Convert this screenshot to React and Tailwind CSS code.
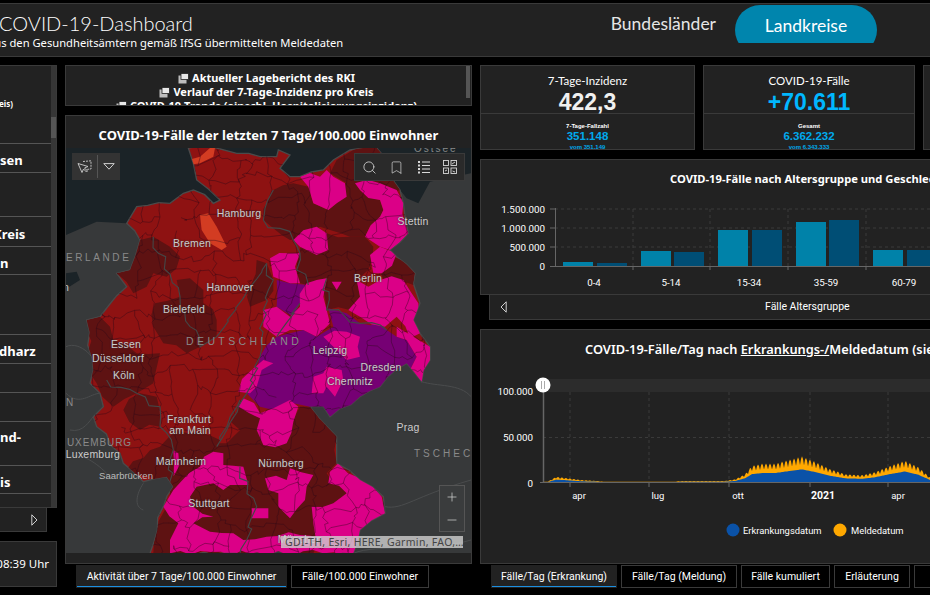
import React from "react";
import { Search, Bookmark, Plus, Minus } from "lucide-react";

function rnd(seed) {
  let s = seed;
  return () => {
    s = (s * 16807) % 2147483647;
    return s / 2147483647;
  };
}
function jag(str, seed, step = 30, amp = 11) {
  const r = rnd(seed);
  const p = str.split(" ").map((q) => q.split(",").map(Number));
  const out = [];
  for (let i = 0; i < p.length; i++) {
    const a = p[i];
    const b = p[(i + 1) % p.length];
    out.push(a);
    const dx = b[0] - a[0];
    const dy = b[1] - a[1];
    const len = Math.hypot(dx, dy);
    const n = Math.floor(len / step);
    for (let k = 1; k < n; k++) {
      const o = (r() - 0.5) * amp * 2;
      out.push([a[0] + (dx * k) / n - (dy / len) * o, a[1] + (dy * k) / n + (dx / len) * o]);
    }
  }
  return out.map((q) => `${q[0].toFixed(0)},${q[1].toFixed(0)}`).join(" ");
}
function jagLine(str, seed) {
  const r = rnd(seed);
  const p = str.split(" ").map((q) => q.split(",").map(Number));
  const out = [p[0]];
  for (let i = 1; i < p.length; i++) {
    const a = p[i - 1];
    const b = p[i];
    const len = Math.hypot(b[0] - a[0], b[1] - a[1]);
    const n = Math.max(1, Math.floor(len / 22));
    for (let k = 1; k <= n; k++) {
      const o = k === n ? 0 : (r() - 0.5) * 22;
      out.push([a[0] + ((b[0] - a[0]) * k) / n + o, a[1] + ((b[1] - a[1]) * k) / n - o]);
    }
  }
  return out.map((q) => `${q[0].toFixed(0)},${q[1].toFixed(0)}`).join(" ");
}

const GERMANY = jag("385,24 470,24 530,40 600,50 650,50 655,30 690,45 660,85 690,110 720,110 790,90 820,60 870,30 950,24 990,90 1020,150 1030,190 1045,280 990,330 1010,350 1065,400 1060,430 1080,490 1060,540 1080,580 1110,620 1110,660 1085,725 1040,670 960,740 900,770 810,830 790,800 750,800 830,890 830,970 900,1020 970,1070 975,1120 900,1170 880,1240 270,1240 310,1100 340,1040 320,1010 250,1025 190,970 180,940 110,860 100,830 130,800 120,760 90,730 100,690 80,540 120,530 200,440 170,400 210,390 240,300 200,250 230,200 330,190 370,160 400,150 460,190 480,180 410,120 400,70", 77, 32, 7);

const DARK = [
  "610,240 640,150 700,130 745,140 760,190 805,210 830,190 855,130 880,120 900,150 960,180 970,210 915,290 870,290 810,270 780,260 720,295 690,300 640,265",
  "810,100 830,60 880,30 960,24 990,100 1020,150 900,140 860,130",
  "720,325 800,280 870,290 915,290 940,320 925,390 890,420 900,470 870,510 800,510 790,450 805,415 770,420 745,435 720,430 710,380",
  "960,390 1000,350 1065,400 1060,435 1020,420 970,420",
  "240,300 280,290 330,320 360,350 320,410 280,400 260,440 220,460 170,400 210,390",
  "350,420 390,415 430,450 430,490 470,540 470,590 420,620 380,640 310,610 280,560 285,490 360,470",
  "590,360 620,370 640,420 620,480 570,500 570,440",
  "80,540 120,530 160,600 230,640 300,640 280,730 230,760 160,800 110,730 90,700",
  "190,810 240,760 290,770 300,860 240,870",
  "200,990 300,920 350,870 480,900 540,780 600,830 660,870 720,800 760,800 830,890 830,970 800,1000 870,1060 800,1120 760,1240 280,1240 330,1050",
].map((p, i) => jag(p, 101 + i));
const RED_TOP = [
  "960,610 990,530 1010,540 1015,590 990,620",
  "480,860 500,835 540,870 500,910 480,910",
].map((p, i) => jag(p, 201 + i));
const PURPLE = [
  "650,420 690,430 745,435 720,490 700,530 650,500",
  "560,760 600,650 650,590 730,570 770,590 820,560 805,505 860,520 900,550 960,545 980,570 1010,590 1040,600 1070,650 1050,690 960,740 900,770 810,830 790,800 750,800 700,790 640,810 600,800",
].map((p, i) => jag(p, 301 + i));
const PINK = [
  "720,110 780,110 800,90 820,110 855,130 860,170 830,190 805,210 760,190 745,140",
  "885,130 960,130 1010,150 1030,190 1045,280 990,330 960,320 915,290 960,230 970,210 960,180 900,150",
  "930,345 960,320 1010,340 965,400 940,400",
  "700,300 770,260 800,280 805,330 770,345 720,320",
  "630,355 720,340 705,380 720,430 690,430 640,410",
  "815,425 845,425 830,450",
  "865,510 900,470 890,420 925,440 960,420 1030,420 1075,490 1080,580 1050,595 1010,530 975,560 900,530",
  "610,510 650,500 690,530 720,500 740,430 770,420 800,415 790,470 800,510 810,550 770,590 730,570 690,570 650,590 610,560",
  "790,590 860,575 900,590 900,650 860,660 820,620",
  "1010,560 1060,590 1110,620 1110,660 1085,725 1050,690 1070,650 1040,600 1010,590",
  "535,755 575,690 610,660 640,670 605,690 590,740 570,760",
  "755,760 760,710 790,700 800,680 845,690 850,720 825,770 800,740 790,760",
  "535,800 550,775 600,820 640,805 690,780 715,800 700,845 680,910 610,915 590,870 600,835",
  "420,980 460,935 490,940 490,975 550,980 565,1035 510,1035 490,1050 460,1030 410,1040 390,1070 400,1100 460,1130 400,1150 450,1175 520,1180 550,1200 620,1190 720,1185 780,1200 790,1240 330,1240 330,1200 355,1150 310,1100 340,1050",
  "615,1015 680,1020 690,985 760,1005 740,1040 735,1080 690,1135 655,1100 655,1060 625,1050",
  "575,1105 625,1105 625,1135 575,1135",
  "805,1030 835,970 900,1015 930,1030 965,1070 975,1120 900,1170 880,1240 790,1240 760,1150 755,1100 820,1090 860,1060",
  "340,930 355,940 340,1010 325,1045",
].map((p, i) => jag(p, 401 + i));
const ORANGE = [
  "385,60 420,50 450,24 465,24 460,50 420,70 385,75",
  "420,225 445,220 470,260 500,320 485,330 450,310 425,270",
];
const STATE_LINES = [
  "610,240 660,265 700,300 720,340 710,390 745,435",
  "640,150 610,240",
  "620,370 640,420 610,510 600,650 560,760 535,800 500,870 470,920",
  "280,290 360,470 420,620 470,590 620,370",
  "140,720 230,760 300,800 300,860 340,930 330,1050",
  "480,900 540,780",
  "540,980 590,1100 560,1200 540,1240",
  "800,415 800,510 900,550 980,570",
  "720,490 650,590",
].map((p, i) => jagLine(p, 501 + i));

const MESH = (() => {
  const r = rnd(12345);
  const step = 58;
  const pts = [];
  for (let i = 0; i < 23; i++) {
    pts.push([]);
    for (let j = 0; j < 23; j++) {
      pts[i].push([i * step + (r() - 0.5) * 44, j * step + (r() - 0.5) * 44]);
    }
  }
  const seg = (a, b) => {
    let d = `M${a[0].toFixed(0)} ${a[1].toFixed(0)}`;
    for (let k = 1; k < 4; k++) {
      const x = a[0] + ((b[0] - a[0]) * k) / 4 + (r() - 0.5) * 18;
      const y = a[1] + ((b[1] - a[1]) * k) / 4 + (r() - 0.5) * 18;
      d += `L${x.toFixed(0)} ${y.toFixed(0)}`;
    }
    return d + `L${b[0].toFixed(0)} ${b[1].toFixed(0)}`;
  };
  let d = "";
  for (let i = 0; i < 23; i++) {
    for (let j = 0; j < 23; j++) {
      if (i < 22 && r() > 0.2) d += seg(pts[i][j], pts[i + 1][j]);
      if (j < 22 && r() > 0.2) d += seg(pts[i][j], pts[i][j + 1]);
    }
  }
  return d;
})();

const LABELS = [
  ["Hamburg", 239, 213], ["Bremen", 192, 243], ["Stettin", 413, 221], ["Berlin", 368, 278],
  ["Hannover", 230, 287], ["Bielefeld", 184, 309], ["Essen", 126, 344], ["Düsseldorf", 118, 358],
  ["Köln", 124, 375], ["Leipzig", 330, 350], ["Dresden", 381, 367], ["Chemnitz", 350, 381],
  ["Frankfurt", 189, 419], ["am Main", 190, 430], ["Mannheim", 181, 461], ["Nürnberg", 281, 463],
  ["Prag", 408, 427], ["Stuttgart", 209, 503], ["Luxemburg", 93, 454], ["München", 300, 539], ["n", 66, 287],
];

function orange(x) {
  const env = [[543, 0], [548, 1], [556, 5.5], [565, 4.5], [580, 2.5], [598, 1.5], [604, 0.5], [672, 0.6], [682, 1.5], [725, 1.5], [735, 3], [745, 8], [752, 16], [762, 18], [775, 18], [790, 22], [802, 25], [815, 20], [830, 13], [845, 8], [862, 7], [875, 10], [890, 16], [905, 21], [918, 15], [930, 5]];
  for (let i = 1; i < env.length; i++) {
    if (x <= env[i][0]) {
      const t = (x - env[i - 1][0]) / (env[i][0] - env[i - 1][0]);
      return env[i - 1][1] + t * (env[i][1] - env[i - 1][1]);
    }
  }
  return 0;
}
const BASE = 482.5;
const areaPaths = (() => {
  let o = `M543 ${BASE}`;
  let b = `M543 ${BASE}`;
  for (let x = 543; x <= 930; x += 1) {
    const v = orange(x) * 1.05;
    const s = Math.sin((x / 8) * Math.PI * 2);
    const wave = 1 - 0.32 * (1 - Math.abs(s));
    o += `L${x} ${(BASE - Math.max(v * wave, 0.8)).toFixed(1)}`;
    b += `L${x} ${(BASE - v * 0.5).toFixed(1)}`;
  }
  return { o: o + `L930 ${BASE}Z`, b: b + `L930 ${BASE}Z` };
})();

function LinkIcon() {
  return (
    <svg width="11" height="11" viewBox="0 0 11 11" className="inline-block shrink-0">
      <rect x="0.5" y="2.5" width="8" height="8" fill="#bdbdbd" />
      <rect x="3" y="0.5" width="7.5" height="6" fill="#e8e8e8" stroke="#222" strokeWidth="0.8" />
    </svg>
  );
}

function Kpi({ w, title, value, color, small, big, sub }) {
  return (
    <div className={`${w} shrink-0 h-full bg-[#222222] border border-[#3a3a3a] flex flex-col items-center text-white`}>
      <div className="h-[48px] w-full border-b border-[#3a3a3a] flex flex-col items-center">
        <div className="mt-[7px] h-[16px] text-[11.5px] leading-[16px] font-['Lato',sans-serif]">{title}</div>
        <div className={`mt-[2px] text-[23px] leading-[22px] font-bold font-['Liberation_Sans',sans-serif] ${color}`}>{value}</div>
      </div>
      <div className="flex flex-col items-center font-['Liberation_Sans',sans-serif]">
        <div className="mt-[9px] text-[6px] leading-[6px] font-bold">{small}</div>
        <div className="text-[11.5px] leading-[12px] font-bold text-[#00a9ec] mt-[1px]">{big}</div>
        <div className="text-[6px] leading-[6px] font-bold text-[#00a9ec] mt-[2px]">{sub}</div>
      </div>
    </div>
  );
}

function Tab({ w, active, children }) {
  return (
    <div className={`${w} h-[23px] shrink-0 flex items-center justify-center text-[10.5px] text-white font-['Roboto',sans-serif] whitespace-nowrap border overflow-hidden ${active ? "bg-[#222222] border-[#222222] shadow-[inset_0_-1px_0_#1c8fe0]" : "bg-black border-[#3a3a3a]"}`}>
      {children}
    </div>
  );
}

function Row({ h, ml, top, children }) {
  return (
    <div className={`${h} shrink-0 border-b border-[#555] flex overflow-hidden ${top ? "items-start pt-[7px]" : "items-center pt-[4px]"}`}>
      {children ? <span className={`${ml} whitespace-nowrap text-[13px] leading-[16px] font-bold text-white font-['Noto_Sans','Open_Sans',sans-serif]`}>{children}</span> : null}
    </div>
  );
}

function GermanyMap() {
  return (
    <svg viewBox="18 24 1215 1215" className="absolute inset-0 w-full h-full">
      <defs>
        <clipPath id="de"><polygon points={GERMANY} /></clipPath>
      </defs>
      <rect x="18" y="24" width="1215" height="1215" fill="#37393a" />
      <polygon fill="#1b2327" points="18,24 1233,24 1233,100 1110,125 1075,190 1040,175 1020,150 700,200 400,200 230,200 200,250 110,245 18,285" />
      <polygon fill="#1b2327" points="18,400 50,395 60,420 28,440 18,440" />
      <path d="M18 620 C60 600 120 660 100 690 M18 760 C60 800 90 760 120 760 M30 870 C70 880 90 840 100 830 M140 1000 C100 960 60 940 30 950 M250 1030 C230 1060 220 1100 250 1110 M1085 725 C1130 740 1200 730 1233 770 M975 1100 C1030 1110 1060 1070 1233 1020 M880 1240 C950 1210 1100 1240 1233 1200" fill="none" stroke="#4a4c4d" strokeWidth="3" />
      <polygon points={GERMANY} fill="#8e1212" stroke="#4a4a4a" strokeWidth="4" />
      <g clipPath="url(#de)">
        {DARK.map((p, i) => <polygon key={i} points={p} fill="#5e1212" />)}
        {RED_TOP.map((p, i) => <polygon key={i} points={p} fill="#8e1212" />)}
        {PURPLE.map((p, i) => <polygon key={i} points={p} fill="#760074" />)}
        {PINK.map((p, i) => <polygon key={i} points={p} fill="#db0087" />)}
        {ORANGE.map((p, i) => <polygon key={i} points={p} fill="#d33c22" />)}
        <path d={MESH} fill="none" stroke="#2c0a18" strokeOpacity="0.62" strokeWidth="2" />
        {STATE_LINES.map((p, i) => <polyline key={i} points={p} fill="none" stroke="#454545" strokeWidth="3.5" />)}
      </g>
    </svg>
  );
}

const CHART_FONT = { fontFamily: "Roboto,sans-serif" };

function BarChart() {
  const bars = [
    [88, 4, "#0082a9"], [122, 3, "#004e75"], [166, 15, "#0082a9"], [199, 14, "#004e75"],
    [243, 36, "#0082a9"], [277, 36, "#004e75"], [321, 44, "#0082a9"], [354, 46, "#004e75"],
    [398, 16, "#0082a9"], [432, 16, "#004e75"],
  ];
  return (
    <svg width="450" height="96" viewBox="481 199 450 96" className="block">
      <g stroke="#3a3a3a" strokeDasharray="3 3">
        {[209, 228, 247].map((y) => <line key={y} x1="555" x2="931" y1={y} y2={y} />)}
        {[633, 710, 788, 866].map((x) => <line key={x} x1={x} x2={x} y1="209" y2="266" />)}
      </g>
      {bars.map(([x, h, c], i) => (
        <rect key={i} x={475 + x} y={266 - h} width="30" height={h} fill={c} />
      ))}
      <g stroke="#666">
        <line x1="555.5" x2="555.5" y1="208" y2="266" />
        <line x1="550" x2="931" y1="266.5" y2="266.5" />
        {[209, 228, 247].map((y) => <line key={y} x1="550" x2="555" y1={y} y2={y} />)}
        {[633, 710, 788, 866].map((x) => <line key={x} x1={x} x2={x} y1="266" y2="270" />)}
      </g>
      <g fill="#fff" fontSize="9.8" style={CHART_FONT}>
        {[["1.500.000", 213], ["1.000.000", 232], ["500.000", 251], ["0", 270]].map(([t, y]) => (
          <text key={t} x="545" y={y} textAnchor="end">{t}</text>
        ))}
        {[["0-4", 594], ["5-14", 671], ["15-34", 749], ["35-59", 826], ["60-79", 904]].map(([t, x]) => (
          <text key={t} x={x} y="286" textAnchor="middle">{t}</text>
        ))}
      </g>
    </svg>
  );
}

function AreaChart() {
  return (
    <svg width="450" height="180" viewBox="481 372 450 180" className="block">
      <rect x="543" y="379" width="388" height="13" fill="#2c2c2c" />
      <g stroke="#3a3a3a" strokeDasharray="3 3">
        <line x1="543" x2="931" y1="437.5" y2="437.5" />
        {[570, 649, 729, 810, 888].map((x) => <line key={x} x1={x} x2={x} y1="392" y2="482" />)}
      </g>
      <path d={areaPaths.o} fill="#ffa800" />
      <path d={areaPaths.b} fill="#0a52a8" />
      <g stroke="#666">
        <line x1="543.5" x2="543.5" y1="385" y2="483" strokeWidth="1.5" />
        <line x1="540" x2="931" y1="482.5" y2="482.5" />
        {[570, 649, 729, 810, 888].map((x) => <line key={x} x1={x} x2={x} y1="482" y2="487" />)}
      </g>
      <g fill="#fff" fontSize="9.8" style={CHART_FONT}>
        {[["100.000", 395], ["50.000", 441], ["0", 487]].map(([t, y]) => (
          <text key={t} x="533" y={y} textAnchor="end">{t}</text>
        ))}
      </g>
      <g fill="#fff" fontSize="9.5" style={CHART_FONT}>
        {[["apr", 579], ["lug", 658], ["ott", 738], ["apr", 898]].map(([t, x], i) => (
          <text key={i} x={x} y="499" textAnchor="middle">{t}</text>
        ))}
        <text x="823" y="499" textAnchor="middle" fontWeight="700" fontSize="10.5">2021</text>
        <text x="743" y="534" fontSize="9.4">Erkrankungsdatum</text>
        <text x="851" y="534" fontSize="9.4">Meldedatum</text>
      </g>
      <circle cx="543" cy="385" r="7.5" fill="#fff" />
      <path d="M541.5 381V389M544.5 381V389" stroke="#aaa" strokeWidth="1" />
      <circle cx="733" cy="530" r="6.5" fill="#0a52a8" />
      <circle cx="840" cy="530" r="6.5" fill="#ffa800" />
    </svg>
  );
}

export default function App() {
  return (
    <div className="w-[930px] h-[595px] overflow-hidden bg-black flex flex-col">
      <header className="mt-[3px] h-[54px] shrink-0 bg-[#222222] border-y border-[#3a3a3a] flex justify-between text-white">
        <div className="overflow-hidden w-[400px] pt-[6px]">
          <div className="text-[20px] leading-[26px] font-light font-['Lato',sans-serif] whitespace-nowrap -ml-[1px]">COVID-19-Dashboard</div>
          <div className="text-[11.2px] leading-[16px] mt-[-1px] font-['Noto_Sans','Open_Sans',sans-serif] whitespace-nowrap -ml-[12px]">aus den Gesundheitsämtern gemäß IfSG übermittelten Meldedaten</div>
        </div>
        <nav className="flex items-start pr-[53px] font-['Lato',sans-serif] text-[17.5px]">
          <div className="h-[38px] mt-[1px] flex items-center mr-[19px] text-[#e6e6e6]">Bundesländer</div>
          <div className="w-[142px] h-[38px] mt-[1px] overflow-hidden">
            <div className="w-[142px] h-[50px] rounded-full bg-[#0085ad] flex justify-center pt-[8px]">Landkreise</div>
          </div>
        </nav>
      </header>

      <div className="flex gap-[8px] mt-[8px] min-h-0 flex-1">
        <aside className="w-[57px] shrink-0 flex flex-col">
          <div className="h-[443px] relative bg-[#222222] border-y border-r border-[#3a3a3a] flex flex-col">
            <div className="absolute right-0 top-0 bottom-0 w-[5px] bg-[#363636]">
              <div className="mt-[51px] h-[21px] bg-[#555]" />
            </div>
            <div className="h-[78px] shrink-0 border-b border-[#555] pt-[32px] overflow-hidden mr-[5px]">
              <div className="text-[8px] leading-[12px] text-white font-bold font-['Noto_Sans',sans-serif] -ml-[1px]">eis)</div>
            </div>
            <div className="flex flex-col pr-[5px]">
              <Row h="h-[29px]" ml="ml-0">sen</Row>
              <Row h="h-[44px]" />
              <Row h="h-[30px]" ml="-ml-[7px]">Kreis</Row>
              <Row h="h-[28px]" ml="ml-0">n</Row>
              <Row h="h-[60px]" />
              <Row h="h-[29px]" ml="-ml-[1px]">dharz</Row>
              <Row h="h-[29px]" />
              <Row h="h-[29px]" />
              <Row h="h-[44px]" ml="ml-0" top>nd-</Row>
              <Row h="h-[28px]" ml="ml-0">is</Row>
            </div>
          </div>
          <div className="w-[47px] h-[24px] shrink-0 bg-[#222222] border-b border-r border-[#3a3a3a] flex items-center justify-end pr-[8px]">
            <svg width="7" height="12" viewBox="0 0 7 12"><path d="M0.8 0.8L6 6L0.8 11.2Z" fill="none" stroke="#cfcfcf" strokeWidth="1" /></svg>
          </div>
          <div className="mt-[9px] h-[46px] shrink-0 bg-[#222222] border-y border-r border-[#3a3a3a] flex items-center justify-end pr-[7px] text-[11.5px] text-white font-['Noto_Sans','Open_Sans',sans-serif] whitespace-nowrap overflow-hidden">
            08:39 Uhr
          </div>
        </aside>

        <main className="w-[407px] shrink-0 flex flex-col">
          <div className="h-[41px] shrink-0 relative bg-[#222222] border border-[#3a3a3a] overflow-hidden pt-[5px] text-[11px] leading-[14px] font-bold text-white font-['Noto_Sans','Open_Sans',sans-serif] whitespace-nowrap text-center">
            <div className="absolute right-[1px] top-0 h-[32px] w-[4px] bg-[#555]" />
            <div className="flex justify-center items-center gap-[3px] pr-[4px]"><LinkIcon />Aktueller Lagebericht des RKI</div>
            <div className="flex justify-center items-center gap-[3px] pr-[4px]"><LinkIcon />Verlauf der 7-Tage-Inzidenz pro Kreis</div>
            <div className="flex justify-center items-center gap-[3px] pr-[4px]"><LinkIcon />COVID-19-Trends (einschl. Hospitalisierungsinzidenz)</div>
          </div>
          <div className="mt-[9px] h-[449px] shrink-0 bg-[#222222] border border-[#3a3a3a] flex flex-col">
            <div className="h-[32px] shrink-0 flex items-center justify-center text-[13px] font-bold text-white font-['Noto_Sans','Open_Sans',sans-serif] whitespace-nowrap pt-[7px]">
              COVID-19-Fälle der letzten 7 Tage/100.000 Einwohner
            </div>
            <div className="h-[405px] shrink-0 relative overflow-hidden font-['Liberation_Sans',sans-serif]">
              <GermanyMap />
              {LABELS.map(([t, x, y]) => (
                <span key={t} className="absolute -translate-x-1/2 -translate-y-1/2 text-[10.5px] leading-none tracking-[0.2px] text-[#cccccc] whitespace-nowrap [text-shadow:0_0_2px_#333333]" style={{ left: x - 66, top: y - 148 }}>{t}</span>
              ))}
              <span className="absolute left-[0px] top-[105px] text-[10px] leading-none tracking-[2.6px] text-[#8a8a8a] whitespace-nowrap">ERLANDE</span>
              <span className="absolute left-[120px] top-[188px] text-[10.5px] leading-none tracking-[3.4px] text-[#8a8a8a] whitespace-nowrap">DEUTSCHLAND</span>
              <span className="absolute left-[1px] top-[290px] text-[10px] leading-none tracking-[0.9px] text-[#8a8a8a] whitespace-nowrap">UXEMBURG</span>
              <span className="absolute left-[348px] top-[301px] text-[10px] leading-none tracking-[3px] text-[#8a8a8a] whitespace-nowrap">TSCHECHIEN</span>
              <span className="absolute left-[0px] top-[250px] text-[10px] leading-none text-[#8a8a8a]">N</span>
              <span className="absolute left-[60px] top-[328px] -translate-y-1/2 -translate-x-1/2 text-[9.5px] leading-none text-[#bbbbbb] whitespace-nowrap">Saarbrücken</span>
              <span className="absolute left-[348px] top-[-4px] text-[10px] leading-none tracking-[2px] text-[#888888]">Ostsee</span>

              <div className="absolute left-[6px] top-[5px] h-[27px] w-[48px] bg-[#333333] flex items-center text-[#cfcfcf]">
                <div className="w-[26px] h-[23px] border-r border-[#555] flex items-center justify-center">
                  <svg width="15" height="14" viewBox="0 0 15 14" fill="none" stroke="#cfcfcf" strokeWidth="0.9">
                    <path d="M6 1.5L14 0.8V9L9 9.5" strokeDasharray="2 1" />
                    <path d="M1 3.5L5 12.5L6.5 9L9.5 12L10.5 11L7.5 8L11 6.5Z" />
                  </svg>
                </div>
                <div className="flex-1 flex items-center justify-center">
                  <svg width="12" height="7" viewBox="0 0 12 7"><path d="M0.8 0.6H11.2L6 6.2Z" fill="none" stroke="#cfcfcf" /></svg>
                </div>
              </div>
              <div className="absolute right-[6px] top-[5px] h-[28px] w-[111px] bg-[#2a2a2a] border border-[#3a3a3a] flex items-center justify-around px-[1px] text-[#d8d8d8]">
                <Search size={15} strokeWidth={1.3} />
                <Bookmark size={15} strokeWidth={1.1} />
                <svg width="14" height="14" viewBox="0 0 14 14" stroke="currentColor" fill="none" strokeWidth="1">
                  <path d="M5 2H13M5 5.5H13M5 9H13M5 12.5H13" />
                  <path d="M1 2H3M1 5.5H3M1 9H3M1 12.5H3" strokeWidth="2" />
                </svg>
                <svg width="14" height="14" viewBox="0 0 14 14" stroke="currentColor" fill="none" strokeWidth="0.9">
                  <rect x="0.5" y="0.5" width="5" height="5" /><rect x="8" y="0.5" width="5.5" height="5" />
                  <rect x="0.5" y="8" width="5" height="5.5" /><rect x="8" y="8" width="5.5" height="5.5" />
                  <path d="M9 4L12 2M2 11L4 10M9.5 11L12 12" />
                </svg>
              </div>
              <div className="absolute left-[373px] top-[337px] w-[26px] h-[47px] bg-[#3a3c3d] border border-[#555] flex flex-col items-center justify-around text-[#d8d8d8]">
                <Plus size={14} strokeWidth={1.2} />
                <Minus size={14} strokeWidth={1.2} />
              </div>
              <div className="absolute left-[215px] top-[388px] w-[182px] h-[12px] bg-[#cfcfcf]/80 pl-[4px] text-[10.5px] leading-[12px] tracking-[0.3px] text-[#444] whitespace-nowrap overflow-hidden font-['Noto_Sans',sans-serif]">
                GDI-TH, Esri, HERE, Garmin, FAO,…
              </div>
            </div>
          </div>
          <div className="flex gap-[4px] pl-[11px] mt-[1px]">
            <Tab w="w-[211px]" active>Aktivität über 7 Tage/100.000 Einwohner</Tab>
            <Tab w="w-[138px]">Fälle/100.000 Einwohner</Tab>
          </div>
        </main>

        <section className="w-[470px] shrink-0 flex flex-col">
          <div className="h-[85px] shrink-0 flex gap-[8px]">
            <Kpi w="w-[215px]" title="7-Tage-Inzidenz" value="422,3" color="text-[#f0f0f0]" small="7-Tage-Fallzahl" big="351.148" sub="vom 351.149" />
            <Kpi w="w-[212px]" title="COVID-19-Fälle" value="+70.611" color="text-[#00b7ff]" small="Gesamt" big="6.362.232" sub="vom 6.343.333" />
            <div className="w-[100px] shrink-0 h-full bg-[#222222] border border-[#3a3a3a]" />
          </div>
          <div className="mt-[9px] h-[136px] shrink-0 bg-[#222222] border border-[#3a3a3a] overflow-hidden">
            <div className="h-[39px] pt-[11px] pl-[189px] text-[11.2px] leading-[16px] font-bold text-white whitespace-nowrap font-['Noto_Sans','Open_Sans',sans-serif]">
              COVID-19-Fälle nach Altersgruppe und Geschlecht
            </div>
            <BarChart />
          </div>
          <div className="ml-[9px] h-[25px] shrink-0 bg-[#222222] border-b border-l border-[#3a3a3a] flex items-center text-[10.5px] text-white font-['Roboto',sans-serif]">
            <svg width="7" height="12" viewBox="0 0 7 12" className="ml-[10px]"><path d="M6.2 0.8L1 6L6.2 11.2Z" fill="none" stroke="#cfcfcf" /></svg>
            <span className="ml-[258px]">Fälle Altersgruppe</span>
          </div>
          <div className="mt-[9px] h-[235px] shrink-0 bg-[#222222] border border-[#3a3a3a] overflow-hidden">
            <div className="h-[42px] pt-[10px] pl-[104px] text-[12.8px] leading-[18px] font-semibold text-white whitespace-nowrap font-['Noto_Sans','Open_Sans',sans-serif]">
              COVID-19-Fälle/Tag nach <span className="underline">Erkrankungs-/</span>Meldedatum (siehe Erläuterung)
            </div>
            <AreaChart />
          </div>
          <div className="flex gap-[4px] pl-[11px] mt-[1px]">
            <Tab w="w-[126px]" active>Fälle/Tag (Erkrankung)</Tab>
            <Tab w="w-[116px]">Fälle/Tag (Meldung)</Tab>
            <Tab w="w-[89px]">Fälle kumuliert</Tab>
            <Tab w="w-[76px]">Erläuterung</Tab>
            <Tab w="w-[60px]">Demo</Tab>
          </div>
        </section>
      </div>
    </div>
  );
}
